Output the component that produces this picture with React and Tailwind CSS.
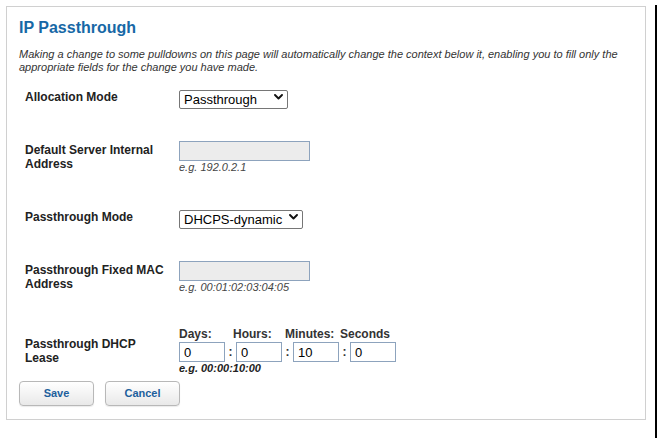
import React from "react";

function Chevron() {
  return (
    <svg
      className="pointer-events-none absolute right-[5px] top-1/2 -translate-y-1/2"
      width="9"
      height="6"
      viewBox="0 0 9 6"
    >
      <path d="M1 1 L4.5 4.5 L8 1" fill="none" stroke="#111" strokeWidth="1.9" strokeLinecap="round" strokeLinejoin="round" />
    </svg>
  );
}

function Select({ value, width }) {
  return (
    <div className={`relative ${width} h-[19px]`}>
      <select
        defaultValue={value}
        className="appearance-none w-full h-full border border-[#767676] rounded-[2px] bg-white pl-[4px] pr-[16px] py-0 text-[13px] leading-[15px] text-black outline-none"
      >
        <option>{value}</option>
      </select>
      <Chevron />
    </div>
  );
}

function Label({ children }) {
  return (
    <div className="w-[160px] pl-[6px] pr-[12px] text-[12px] leading-[14px] font-bold text-[#222]">
      {children}
    </div>
  );
}

function Hint({ children, bold }) {
  return (
    <div className={`text-[11px] leading-[12px] italic ${bold ? "font-bold text-[#222]" : "text-[#444]"}`}>
      {children}
    </div>
  );
}

function LeaseInput({ value }) {
  return (
    <input
      defaultValue={value}
      className="w-[46px] h-[20px] border border-[#8da3bd] bg-white px-[4px] text-[13px] text-black outline-none"
    />
  );
}

function Colon() {
  return <span className="w-[11px] text-center text-[12px] font-bold text-[#333]">:</span>;
}

const btn =
  "w-[75px] h-[25px] rounded-[4px] border border-[#b8b8b8] bg-gradient-to-b from-white to-[#e9e9e9] text-[11px] font-bold text-[#1d5f9c] shadow-[0_1px_1px_rgba(0,0,0,0.08)]";

export default function App() {
  return (
    <div
      className="flex w-[657px] h-[438px] bg-white overflow-hidden"
      style={{ fontFamily: '"Liberation Sans", Arial, sans-serif' }}
    >
      <div className="w-[655px] pl-[6px] pt-[6px]">
        <div className="w-[640px] h-[414px] border border-[#d0d0d0] pl-[12px] pt-[11px]">
          <h1 className="text-[16px] leading-[20px] font-bold text-[#1768a6]">IP Passthrough</h1>
          <p className="mt-[10px] text-[11px] leading-[13px] italic text-[#333] whitespace-nowrap">
            Making a change to some pulldowns on this page will automatically change the context below it, enabling you to fill only the
            <br />
            appropriate fields for the change you have made.
          </p>

          <div className="mt-[13px] flex items-center">
            <Label>Allocation Mode</Label>
            <Select value="Passthrough" width="w-[109px]" />
          </div>

          <div className="mt-[35px] flex items-center">
            <Label>Default Server Internal Address</Label>
            <div>
              <input className="block w-[131px] h-[20px] border border-[#8da3bd] bg-[#ececec] outline-none" />
              <Hint>e.g. 192.0.2.1</Hint>
            </div>
          </div>

          <div className="mt-[34px] flex items-center">
            <Label>Passthrough Mode</Label>
            <Select value="DHCPS-dynamic" width="w-[124px]" />
          </div>

          <div className="mt-[35px] flex items-center">
            <Label>Passthrough Fixed MAC Address</Label>
            <div>
              <input className="block w-[131px] h-[20px] border border-[#8da3bd] bg-[#ececec] outline-none" />
              <Hint>e.g. 00:01:02:03:04:05</Hint>
            </div>
          </div>

          <div className="mt-[34px] flex items-center">
            <Label>Passthrough DHCP Lease</Label>
            <div>
              <div className="flex text-[12px] leading-[14px] font-bold text-[#333]">
                <span className="w-[54px]">Days:</span>
                <span className="w-[52px]">Hours:</span>
                <span className="w-[55px]">Minutes:</span>
                <span>Seconds</span>
              </div>
              <div className="mt-[1px] flex items-center">
                <LeaseInput value="0" />
                <Colon />
                <LeaseInput value="0" />
                <Colon />
                <LeaseInput value="10" />
                <Colon />
                <LeaseInput value="0" />
              </div>
              <Hint bold>e.g. 00:00:10:00</Hint>
            </div>
          </div>

          <div className="mt-[7px] flex gap-[11px]">
            <button className={btn}>Save</button>
            <button className={btn}>Cancel</button>
          </div>
        </div>
      </div>
      <div className="w-[2px] mt-[5px] bg-black" />
    </div>
  );
}
